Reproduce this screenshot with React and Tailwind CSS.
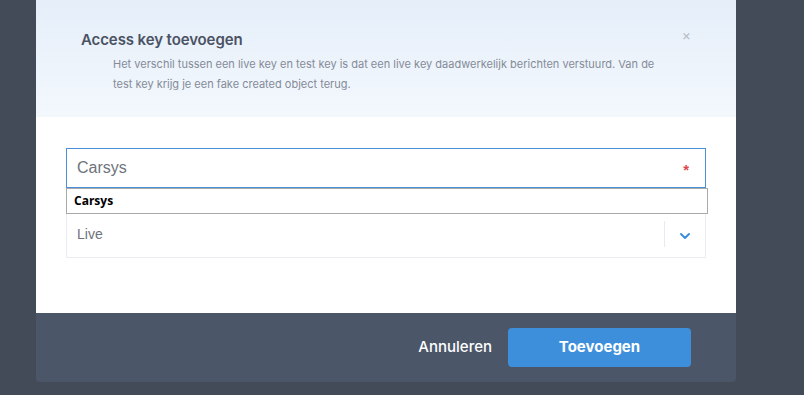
import React from "react";

const ChevronDown = () => (
  <svg width="12" height="8" viewBox="0 0 12 8" fill="none">
    <path d="M2 2l4 4 4-4" stroke="#3b8ede" strokeWidth="2" strokeLinecap="round" strokeLinejoin="round" />
  </svg>
);

const App = () => {
  return (
    <div className="w-[804px] h-[395px] bg-[#434a58] overflow-hidden pl-[36px] font-['Inter',sans-serif]">
      <div className="w-[700px] h-[382px] mt-0 flex flex-col rounded-b-[4px] overflow-hidden">
        <div className="h-[117px] bg-gradient-to-b from-[#e5eef9] to-[#f3f8fd] pl-[45px] pr-[44px] pt-[29px] relative">
          <h2 className="text-[15px] font-semibold text-[#4a5264] leading-[22px] tracking-[-0.1px]">
            Access key toevoegen
          </h2>
          <p className="mt-[3px] ml-[32px] w-[560px] text-[11px] leading-[20px] text-[#858b98]">
            Het verschil tussen een live key en test key is dat een live key daadwerkelijk berichten verstuurd. Van de test key krijg je een fake created object terug.
          </p>
          <span className="absolute right-[45px] top-[28px] text-[14px] text-[#b6bcc6] leading-none">×</span>
        </div>

        <div className="flex-1 bg-white px-[30px] pt-[31px]">
          <div className="relative">
            <div className="h-[40px] border border-[#4a90d9] flex items-center justify-between pl-[10px] pr-[16px] font-['Liberation_Sans',sans-serif]">
              <span className="text-[16px] text-[#6e737b]">Carsys</span>
              <span className="text-[15px] font-bold text-[#e0474c] pt-[4px]">*</span>
            </div>
            <div className="absolute left-0 top-[40px] w-[642px] h-[26px] border border-[#a9a9a9] bg-white flex items-center pl-[7px] z-10">
              <span className="text-[12px] font-bold text-black font-['Open_Sans',sans-serif]">Carsys</span>
            </div>
            <div className="mt-[22px] h-[48px] border border-[#e9edf3] flex items-center font-['Liberation_Sans',sans-serif]">
              <span className="flex-1 pl-[10px] pt-[0px] text-[14px] text-[#6e737b]">Live</span>
              <div className="w-[41px] h-[26px] border-l border-[#e6ebf1] flex items-center justify-center pt-[4px]">
                <ChevronDown />
              </div>
            </div>
          </div>
        </div>

        <div className="h-[69px] bg-[#4b5669] flex items-center justify-end pr-[45px] gap-[12px]">
          <button className="text-[15px] font-medium text-white px-[4px]">Annuleren</button>
          <button className="w-[183px] h-[39px] rounded-[4px] bg-[#3d8fdc] text-white text-[15px] font-bold">
            Toevoegen
          </button>
        </div>
      </div>
    </div>
  );
};

export default App;
